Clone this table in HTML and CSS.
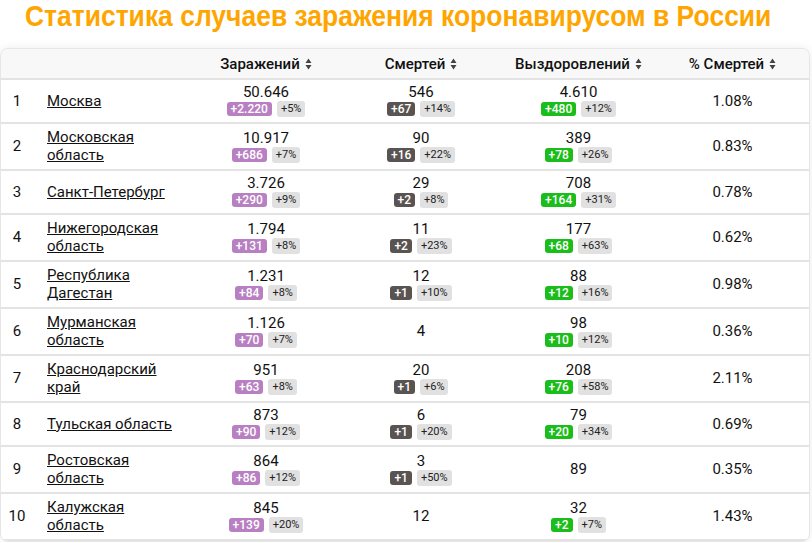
FILE: index.html
```html
<!DOCTYPE html>
<html lang="ru">
<head>
<meta charset="utf-8">
<title>Статистика</title>
<link rel="stylesheet" href="styles.css">
</head>
<body>
<div class="head"><h1 class="title">Статистика случаев заражения коронавирусом в России</h1></div>
<div class="card">
<table class="stats">
<colgroup>
<col class="c-num"><col class="c-name"><col class="c-inf"><col class="c-dead"><col class="c-rec"><col class="c-pct">
</colgroup>
<thead>
<tr>
<th></th><th></th>
<th><span class="th-in">Заражений <svg class="sort" viewBox="0 0 7 12" width="7" height="12"><path d="M3.5 0.5L6.5 5H0.5Z M3.5 11.5L6.5 7H0.5Z"/></svg></span></th>
<th><span class="th-in">Смертей <svg class="sort" viewBox="0 0 7 12" width="7" height="12"><path d="M3.5 0.5L6.5 5H0.5Z M3.5 11.5L6.5 7H0.5Z"/></svg></span></th>
<th><span class="th-in">Выздоровлений <svg class="sort" viewBox="0 0 7 12" width="7" height="12"><path d="M3.5 0.5L6.5 5H0.5Z M3.5 11.5L6.5 7H0.5Z"/></svg></span></th>
<th><span class="th-in">% Смертей <svg class="sort" viewBox="0 0 7 12" width="7" height="12"><path d="M3.5 0.5L6.5 5H0.5Z M3.5 11.5L6.5 7H0.5Z"/></svg></span></th>
</tr>
</thead>
<tbody>
<tr><td class="idx">1</td><td class="name"><a href="#">Москва</a></td>
<td><div class="val">50.646</div><div class="bd"><span class="b inf">+2.220</span><span class="b pc">+5%</span></div></td>
<td><div class="val">546</div><div class="bd"><span class="b dead">+67</span><span class="b pc">+14%</span></div></td>
<td><div class="val">4.610</div><div class="bd"><span class="b rec">+480</span><span class="b pc">+12%</span></div></td>
<td class="pct">1.08%</td></tr>

<tr><td class="idx">2</td><td class="name"><a href="#">Московская область</a></td>
<td><div class="val">10.917</div><div class="bd"><span class="b inf">+686</span><span class="b pc">+7%</span></div></td>
<td><div class="val">90</div><div class="bd"><span class="b dead">+16</span><span class="b pc">+22%</span></div></td>
<td><div class="val">389</div><div class="bd"><span class="b rec">+78</span><span class="b pc">+26%</span></div></td>
<td class="pct">0.83%</td></tr>

<tr><td class="idx">3</td><td class="name"><a href="#">Санкт-Петербург</a></td>
<td><div class="val">3.726</div><div class="bd"><span class="b inf">+290</span><span class="b pc">+9%</span></div></td>
<td><div class="val">29</div><div class="bd"><span class="b dead">+2</span><span class="b pc">+8%</span></div></td>
<td><div class="val">708</div><div class="bd"><span class="b rec">+164</span><span class="b pc">+31%</span></div></td>
<td class="pct">0.78%</td></tr>

<tr><td class="idx">4</td><td class="name"><a href="#">Нижегородская область</a></td>
<td><div class="val">1.794</div><div class="bd"><span class="b inf">+131</span><span class="b pc">+8%</span></div></td>
<td><div class="val">11</div><div class="bd"><span class="b dead">+2</span><span class="b pc">+23%</span></div></td>
<td><div class="val">177</div><div class="bd"><span class="b rec">+68</span><span class="b pc">+63%</span></div></td>
<td class="pct">0.62%</td></tr>

<tr><td class="idx">5</td><td class="name"><a href="#">Республика Дагестан</a></td>
<td><div class="val">1.231</div><div class="bd"><span class="b inf">+84</span><span class="b pc">+8%</span></div></td>
<td><div class="val">12</div><div class="bd"><span class="b dead">+1</span><span class="b pc">+10%</span></div></td>
<td><div class="val">88</div><div class="bd"><span class="b rec">+12</span><span class="b pc">+16%</span></div></td>
<td class="pct">0.98%</td></tr>

<tr><td class="idx">6</td><td class="name"><a href="#">Мурманская область</a></td>
<td><div class="val">1.126</div><div class="bd"><span class="b inf">+70</span><span class="b pc">+7%</span></div></td>
<td><div class="val">4</div></td>
<td><div class="val">98</div><div class="bd"><span class="b rec">+10</span><span class="b pc">+12%</span></div></td>
<td class="pct">0.36%</td></tr>

<tr><td class="idx">7</td><td class="name"><a href="#">Краснодарский край</a></td>
<td><div class="val">951</div><div class="bd"><span class="b inf">+63</span><span class="b pc">+8%</span></div></td>
<td><div class="val">20</div><div class="bd"><span class="b dead">+1</span><span class="b pc">+6%</span></div></td>
<td><div class="val">208</div><div class="bd"><span class="b rec">+76</span><span class="b pc">+58%</span></div></td>
<td class="pct">2.11%</td></tr>

<tr><td class="idx">8</td><td class="name"><a href="#">Тульская область</a></td>
<td><div class="val">873</div><div class="bd"><span class="b inf">+90</span><span class="b pc">+12%</span></div></td>
<td><div class="val">6</div><div class="bd"><span class="b dead">+1</span><span class="b pc">+20%</span></div></td>
<td><div class="val">79</div><div class="bd"><span class="b rec">+20</span><span class="b pc">+34%</span></div></td>
<td class="pct">0.69%</td></tr>

<tr><td class="idx">9</td><td class="name"><a href="#">Ростовская область</a></td>
<td><div class="val">864</div><div class="bd"><span class="b inf">+86</span><span class="b pc">+12%</span></div></td>
<td><div class="val">3</div><div class="bd"><span class="b dead">+1</span><span class="b pc">+50%</span></div></td>
<td><div class="val">89</div></td>
<td class="pct">0.35%</td></tr>

<tr><td class="idx">10</td><td class="name"><a href="#">Калужская область</a></td>
<td><div class="val">845</div><div class="bd"><span class="b inf">+139</span><span class="b pc">+20%</span></div></td>
<td><div class="val">12</div></td>
<td><div class="val">32</div><div class="bd"><span class="b rec">+2</span><span class="b pc">+7%</span></div></td>
<td class="pct">1.43%</td></tr>
</tbody>
</table>
</div>
</body>
</html>
```
FILE: styles.css
```css
html, body {
  margin: 0;
  padding: 0;
  background: #fff;
}
body {
  font-family: Roboto, "Noto Sans", sans-serif;
  color: #111;
  overflow: hidden;
}
.head {
  height: 32px;
  margin-bottom: 16px;
  display: flex;
  justify-content: center;
  padding-right: 16px;
  overflow: visible;
}
.title {
  margin: 0;
  white-space: nowrap;
  line-height: 32px;
  font-family: "Liberation Sans", Arial, sans-serif;
  font-weight: bold;
  font-size: 30px;
  color: #ffa500;
  transform: scaleX(0.882);
  transform-origin: center top;
}
.card {
  width: 808px;
  border: 1px solid #e6e6e6;
  border-radius: 8px;
  box-shadow: 0 0 10px rgba(0,0,0,0.08);
  overflow: hidden;
  background: #fff;
}
.stats {
  width: 100%;
  table-layout: fixed;
  border-collapse: collapse;
  font-size: 15px;
}
.c-num { width: 32px; }
.c-name { width: 158px; }
.c-inf { width: 150px; }
.c-dead { width: 160px; }
.c-rec { width: 155px; }
.c-pct { width: 153px; }

.stats thead th {
  background: #f8f8f8;
  height: 29px;
  padding: 0;
  font-size: 15px;
  font-weight: 500;
  color: #111;
  text-align: center;
  border-bottom: 2px solid #e3e3e3;
}
.th-in {
  display: inline-flex;
  align-items: center;
  gap: 5px;
  white-space: nowrap;
}
.sort {
  fill: #444;
  display: block;
}
.stats tbody td {
  padding: 4px 0 5px;
  text-align: center;
  vertical-align: middle;
  border-bottom: 2px solid #e3e3e3;
  line-height: 18px;
}
.stats tbody td.name {
  text-align: left;
  padding: 4px 10px 5px 14px;
}
.name a {
  color: #111;
  text-decoration: underline;
  font-weight: 400;
}
.val {
  line-height: 17px;
}
.bd {
  display: flex;
  justify-content: center;
  align-items: center;
  gap: 5px;
  height: 16px;
}
.b {
  border-radius: 3px;
  padding: 0 4px;
}
.inf, .dead, .rec {
  color: #fff;
  font-size: 12px;
  font-weight: 500;
  line-height: 14px;
}
.inf { background: #b87fc2; }
.dead { background: #595452; }
.rec { background: #1bbd1b; }
.pc {
  background: #e1e1e1;
  color: #222;
  font-size: 11px;
  line-height: 16px;
}
.pct {
  font-size: 15px;
}
```
